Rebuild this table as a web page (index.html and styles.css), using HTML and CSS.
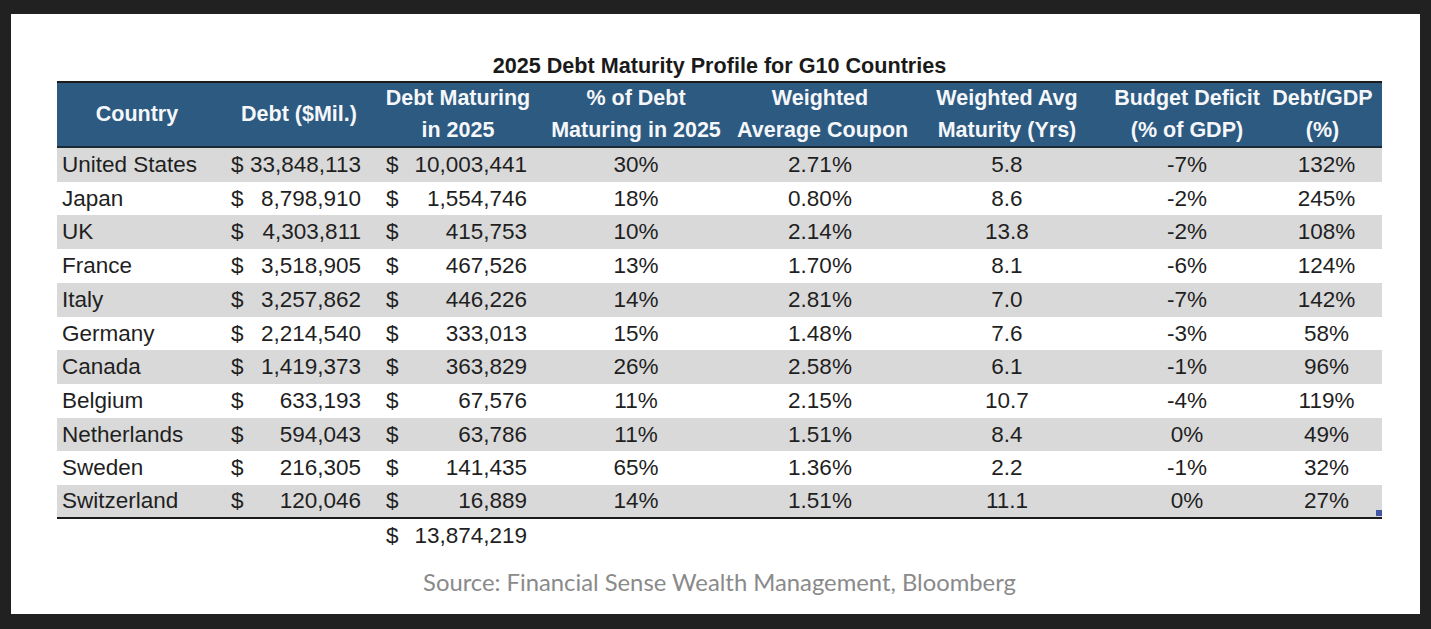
FILE: index.html
```html
<!DOCTYPE html>
<html lang="en">
<head>
<meta charset="utf-8">
<title>2025 Debt Maturity Profile for G10 Countries</title>
<link rel="stylesheet" href="styles.css">
</head>
<body>
<div class="panel">
  <div class="sheet">
    <h1 class="title">2025 Debt Maturity Profile for G10 Countries</h1>
    <table class="grid">
      <colgroup>
        <col class="c-country"><col class="c-debt"><col class="c-mat"><col class="c-pct"><col class="c-coupon"><col class="c-wam"><col class="c-deficit"><col class="c-gdp">
      </colgroup>
      <thead>
        <tr>
          <th>Country</th>
          <th>Debt ($Mil.)</th>
          <th>Debt Maturing<br>in 2025</th>
          <th>% of Debt<br>Maturing in 2025</th>
          <th>Weighted<br>Average Coupon</th>
          <th>Weighted Avg<br>Maturity (Yrs)</th>
          <th>Budget Deficit<br>(% of GDP)</th>
          <th>Debt/GDP<br>(%)</th>
        </tr>
      </thead>
      <tbody>
        <tr class="shade"><td class="name">United States</td><td class="acc a1"><span>$</span><span>33,848,113</span></td><td class="acc a2"><span>$</span><span>10,003,441</span></td><td>30%</td><td>2.71%</td><td>5.8</td><td>-7%</td><td class="gdp">132%</td></tr>
        <tr><td class="name">Japan</td><td class="acc a1"><span>$</span><span>8,798,910</span></td><td class="acc a2"><span>$</span><span>1,554,746</span></td><td>18%</td><td>0.80%</td><td>8.6</td><td>-2%</td><td class="gdp">245%</td></tr>
        <tr class="shade"><td class="name">UK</td><td class="acc a1"><span>$</span><span>4,303,811</span></td><td class="acc a2"><span>$</span><span>415,753</span></td><td>10%</td><td>2.14%</td><td>13.8</td><td>-2%</td><td class="gdp">108%</td></tr>
        <tr><td class="name">France</td><td class="acc a1"><span>$</span><span>3,518,905</span></td><td class="acc a2"><span>$</span><span>467,526</span></td><td>13%</td><td>1.70%</td><td>8.1</td><td>-6%</td><td class="gdp">124%</td></tr>
        <tr class="shade"><td class="name">Italy</td><td class="acc a1"><span>$</span><span>3,257,862</span></td><td class="acc a2"><span>$</span><span>446,226</span></td><td>14%</td><td>2.81%</td><td>7.0</td><td>-7%</td><td class="gdp">142%</td></tr>
        <tr><td class="name">Germany</td><td class="acc a1"><span>$</span><span>2,214,540</span></td><td class="acc a2"><span>$</span><span>333,013</span></td><td>15%</td><td>1.48%</td><td>7.6</td><td>-3%</td><td class="gdp">58%</td></tr>
        <tr class="shade"><td class="name">Canada</td><td class="acc a1"><span>$</span><span>1,419,373</span></td><td class="acc a2"><span>$</span><span>363,829</span></td><td>26%</td><td>2.58%</td><td>6.1</td><td>-1%</td><td class="gdp">96%</td></tr>
        <tr><td class="name">Belgium</td><td class="acc a1"><span>$</span><span>633,193</span></td><td class="acc a2"><span>$</span><span>67,576</span></td><td>11%</td><td>2.15%</td><td>10.7</td><td>-4%</td><td class="gdp">119%</td></tr>
        <tr class="shade"><td class="name">Netherlands</td><td class="acc a1"><span>$</span><span>594,043</span></td><td class="acc a2"><span>$</span><span>63,786</span></td><td>11%</td><td>1.51%</td><td>8.4</td><td>0%</td><td class="gdp">49%</td></tr>
        <tr><td class="name">Sweden</td><td class="acc a1"><span>$</span><span>216,305</span></td><td class="acc a2"><span>$</span><span>141,435</span></td><td>65%</td><td>1.36%</td><td>2.2</td><td>-1%</td><td class="gdp">32%</td></tr>
        <tr class="shade last"><td class="name">Switzerland</td><td class="acc a1"><span>$</span><span>120,046</span></td><td class="acc a2"><span>$</span><span>16,889</span></td><td>14%</td><td>1.51%</td><td>11.1</td><td>0%</td><td class="gdp corner">27%<span class="handle"></span></td></tr>
      </tbody>
      <tfoot>
        <tr><td></td><td></td><td class="acc a2"><span>$</span><span>13,874,219</span></td><td></td><td></td><td></td><td></td><td></td></tr>
      </tfoot>
    </table>
    <p class="source">Source: Financial Sense Wealth Management, Bloomberg</p>
  </div>
</div>
</body>
</html>
```

FILE: styles.css
```css
html, body {
  margin: 0;
  padding: 0;
  background: #212121;
}

.panel {
  box-sizing: border-box;
  margin: 14px 0 0 11px;
  width: 1409px;
  height: 600px;
  background: #ffffff;
  padding: 39px 0 0 46px;
}

.sheet {
  width: 1325px;
}

.title {
  margin: 0 0 2px;
  font-family: "Liberation Sans", Arial, sans-serif;
  font-weight: 700;
  font-size: 21.6px;
  line-height: 26px;
  text-align: center;
  color: #1a1a1a;
}

.grid {
  border-collapse: separate;
  border-spacing: 0;
  table-layout: fixed;
  width: 1325px;
  font-family: "Liberation Sans", Arial, sans-serif;
}

.c-country { width: 160px; }
.c-debt { width: 164px; }
.c-mat { width: 154px; }
.c-pct { width: 202px; }
.c-coupon { width: 166px; }
.c-wam { width: 208px; }
.c-deficit { width: 152px; }
.c-gdp { width: 119px; }

.grid th {
  background: #2d5a80;
  color: #f5f7fa;
  font-weight: 700;
  font-size: 21.5px;
  line-height: 31.5px;
  padding: 0;
  border-top: 2px solid #1c1c1c;
  border-bottom: 2px solid #1c2a36;
  text-align: center;
  vertical-align: middle;
  white-space: nowrap;
}

.grid td {
  padding: 0;
  font-size: 22.5px;
  line-height: 33.7px;
  color: #1f1f1f;
  text-align: center;
  white-space: nowrap;
}

.grid tr.shade td {
  background: #d9d9d9;
}

.grid tr.last td {
  line-height: 32px;
  border-bottom: 2px solid #1a1a1a;
}

.grid td.name {
  text-align: left;
  padding-left: 5px;
}

.grid td.acc {
  text-align: right;
}

.grid td.acc span:first-child {
  float: left;
}

.grid td.acc span:last-child {
  float: right;
}

.grid td.a1 {
  padding: 0 20px 0 14px;
}

.grid td.a2 {
  padding: 0 8px 0 5px;
}

.grid td.gdp {
  padding-left: 8px;
}

.grid td.corner {
  position: relative;
}

.handle {
  position: absolute;
  right: 0;
  bottom: 1px;
  width: 6px;
  height: 6px;
  background: #4556a6;
}

.source {
  margin: 14px 0 0;
  font-family: Lato, "Open Sans", sans-serif;
  font-size: 23.8px;
  line-height: 30px;
  text-align: center;
  color: #8a8a8a;
}
```
